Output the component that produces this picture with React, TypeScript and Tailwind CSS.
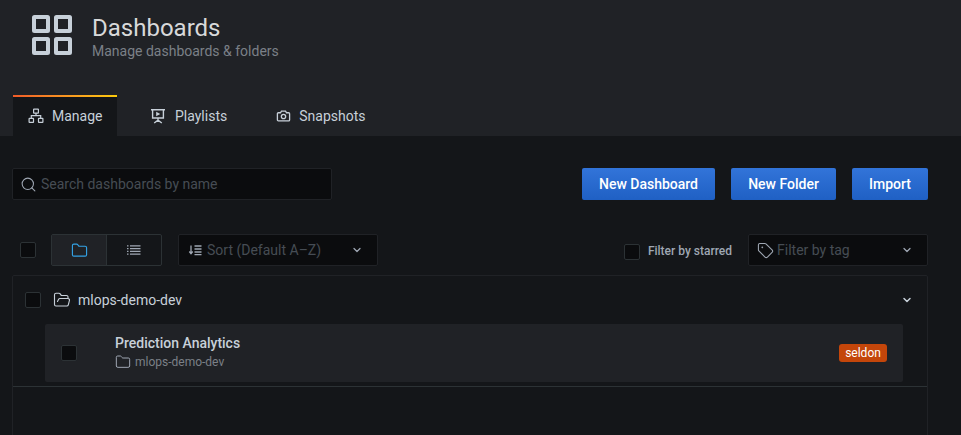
import { ChevronDown, Folder, FolderOpen, Search, Tag } from "lucide-react"

function Check({ className = "" }: { className?: string }) {
  return <div className={"w-4 h-4 shrink-0 rounded-[2px] bg-[#0b0c0e] border border-[#2c3235] " + className} />
}

function GridIcon() {
  return (
    <svg width="40" height="40" viewBox="0 0 40 40" fill="none" stroke="#c7d0d9" strokeWidth="4">
      <rect x="2" y="2" width="14" height="14" rx="0.5" />
      <rect x="24" y="2" width="14" height="14" rx="0.5" />
      <rect x="2" y="24" width="14" height="14" rx="0.5" />
      <rect x="24" y="24" width="14" height="14" rx="0.5" />
    </svg>
  )
}

function ManageIcon() {
  return (
    <svg width="16" height="16" viewBox="0 0 16 16" fill="none" stroke="#c7d0d9" strokeWidth="1.2">
      <rect x="5.6" y="1.1" width="4.8" height="4" rx="0.4" />
      <rect x="1.1" y="10.4" width="4.4" height="4" rx="0.4" />
      <rect x="10.5" y="10.4" width="4.4" height="4" rx="0.4" />
      <path d="M8 5.1v2.6M3.3 10.4V7.7h9.400v2.700" />
    </svg>
  )
}

function PlaylistIcon() {
  return (
    <svg width="17" height="16" viewBox="0 0 17 16" fill="none" stroke="#c7d0d9" strokeWidth="1.4">
      <path d="M1 1.800h14M2.600 1.800v8.200h10.800V1.800M8 10v2.200M4.200 15l3.800-2.800 3.800 2.800" />
      <path d="M6.200 3.800l4 2.200-4 2.200z" fill="#c7d0d9" stroke="none" />
    </svg>
  )
}

function CameraIcon() {
  return (
    <svg width="15" height="16" viewBox="0 0 16 16" fill="none" stroke="#c7d0d9" strokeWidth="1.4">
      <path d="M2.500 4.500h2.300l1-1.700h4.400l1 1.700h2.300a1 1 0 0 1 1 1v6.700a1 1 0 0 1-1 1h-11a1 1 0 0 1-1-1V5.500a1 1 0 0 1 1-1z" />
      <circle cx="8" cy="8.500" r="2.300" />
    </svg>
  )
}

function ListIcon() {
  return (
    <svg width="16" height="16" viewBox="0 0 16 16" fill="none" stroke="#9fa7b3" strokeWidth="1.300">
      <path d="M4 3.800h10.500M4 6.600h10.500M4 9.400h10.500M4 12.200h10.500" />
      <path d="M1 3.800h1.500M1 6.600h1.500M1 9.400h1.500M1 12.200h1.500" />
    </svg>
  )
}

function SortIcon() {
  return (
    <svg width="14" height="14" viewBox="0 0 14 14" fill="none" stroke="#9fa7b3" strokeWidth="1.300">
      <path d="M3 2.500v8M1.300 8.500L3 10.600l1.700-2.100" />
      <path d="M6.500 3h7M6.500 6h7M6.500 9h7M6.500 11.700h7" />
    </svg>
  )
}

function NavTab({ icon, label, active }: { icon: React.ReactNode; label: string; active?: boolean }) {
  return (
    <div
      className={
        "relative h-[41px] flex items-center gap-2 text-sm text-[#c7d0d9] " +
        (active ? "w-[104px] pl-[15px] bg-[#141619]" : "")
      }
    >
      {active && <div className="absolute left-0 right-0 top-0 h-[2px] bg-gradient-to-r from-[#f05a28] to-[#fbca0a]" />}
      {icon}
      <span>{label}</span>
    </div>
  )
}

export default function App() {
  return (
    <div className="w-[961px] h-[435px] overflow-hidden bg-[#141619] font-['Roboto',sans-serif] text-[#c7d0d9]">
      {/* Header */}
      <div className="h-[136px] bg-[#202226] flex flex-col">
        <div className="flex items-start pl-8 pt-[15px] h-[95px]">
          <GridIcon />
          <div className="ml-5 -mt-[1px]">
            <h1 className="text-[24px] leading-[28px] text-[#d8d9da] font-normal">Dashboards</h1>
            <p className="text-sm leading-[17px] mt-[1px] text-[#7b8087]">Manage dashboards &amp; folders</p>
          </div>
        </div>
        <div className="flex pl-[13px]">
          <NavTab active icon={<ManageIcon />} label="Manage" />
          <div className="ml-[33px]">
            <NavTab icon={<PlaylistIcon />} label="Playlists" />
          </div>
          <div className="ml-[49px]">
            <NavTab icon={<CameraIcon />} label="Snapshots" />
          </div>
        </div>
      </div>

      {/* Search and actions */}
      <div className="mt-8 pl-3 pr-[33px] flex items-center">
        <div className="w-[320px] h-8 flex items-center pl-[7px] bg-[#0b0c0e] border border-[#202226] rounded-[2px]">
          <Search size={17} strokeWidth={1.5} className="text-[#9fa7b3]" />
          <span className="ml-[4px] text-sm text-[#464c54]">Search dashboards by name</span>
        </div>
        <div className="ml-auto flex gap-4">
          <button className="w-[133px] h-8 rounded-[2px] bg-gradient-to-b from-[#3274d9] to-[#1f60c4] text-sm font-medium text-white">New Dashboard</button>
          <button className="w-[105px] h-8 rounded-[2px] bg-gradient-to-b from-[#3274d9] to-[#1f60c4] text-sm font-medium text-white">New Folder</button>
          <button className="w-[76px] h-8 rounded-[2px] bg-gradient-to-b from-[#3274d9] to-[#1f60c4] text-sm font-medium text-white">Import</button>
        </div>
      </div>

      {/* Filters */}
      <div className="mt-[34px] pl-5 pr-[33px] flex items-center">
        <Check />
        <div className="ml-[15px] w-[111px] h-8 flex border border-[#2c3235] rounded-[2px]">
          <div className="w-[55px] flex items-center justify-center bg-[#202226] border-r border-[#2c3235]">
            <Folder size={17} strokeWidth={1.6} className="text-[#33a2e5]" />
          </div>
          <div className="flex-1 flex items-center justify-center">
            <ListIcon />
          </div>
        </div>
        <div className="ml-4 w-[200px] h-8 flex items-center pl-[9px] pr-[14px] bg-[#0b0c0e] border border-[#202226] rounded-[2px]">
          <SortIcon />
          <span className="ml-[5px] text-sm text-[#464c54]">Sort (Default A–Z)</span>
          <ChevronDown size={12} strokeWidth={2.5} className="ml-auto text-[#9fa7b3]" />
        </div>
        <div className="ml-auto flex items-center">
          <Check className="mt-1" />
          <span className="ml-2 mt-[2px] text-xs font-medium text-[#9fa7b3]">Filter by starred</span>
          <div className="ml-4 w-[180px] h-8 flex items-center pl-2 pr-[14px] bg-[#0b0c0e] border border-[#202226] rounded-[2px]">
            <Tag size={17} strokeWidth={1.5} className="text-[#9fa7b3]" />
            <span className="ml-[3px] text-sm text-[#464c54]">Filter by tag</span>
            <ChevronDown size={12} strokeWidth={2.5} className="ml-auto text-[#9fa7b3]" />
          </div>
        </div>
      </div>

      {/* Results */}
      <div className="mt-[9px] ml-3 w-[916px] h-[200px] bg-[#141619] border border-[#202226] rounded-[2px]">
        <div className="h-[48px] flex items-center pl-3 pr-[14px]">
          <Check />
          <FolderOpen size={18} strokeWidth={1.5} className="ml-3 text-[#c7d0d9]" />
          <span className="ml-[7px] text-sm text-[#c7d0d9]">mlops-demo-dev</span>
          <ChevronDown size={12} strokeWidth={3} className="ml-auto text-[#c7d0d9]" />
        </div>
        <div className="ml-8 w-[858px] h-[58px] flex items-center px-4 bg-[#202226] rounded-[2px]">
          <Check />
          <div className="ml-[38px] -mt-[2px]">
            <div className="text-sm leading-[18px] font-medium text-[#c7d0d9]">Prediction Analytics</div>
            <div className="flex items-center gap-1 text-xs leading-[16px] mt-[2px] text-[#7b8087]">
              <Folder size={16} strokeWidth={1.5} className="text-[#9fa7b3]" />
              <span>mlops-demo-dev</span>
            </div>
          </div>
          <span className="ml-auto w-12 h-[18px] flex items-center justify-center rounded-[3px] bg-[#c4460a] text-xs text-white">seldon</span>
        </div>
        <div className="mt-1 border-t border-[#2c3235]" />
      </div>
    </div>
  )
}
